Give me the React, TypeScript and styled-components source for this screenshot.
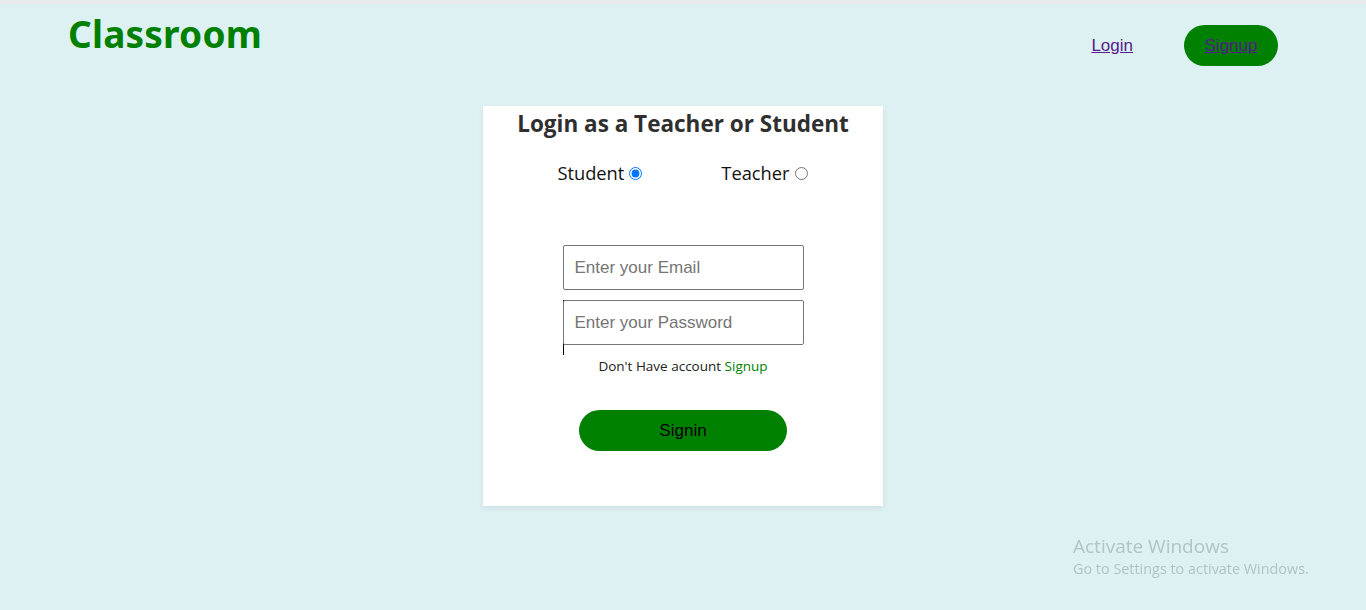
import React from "react";
import styled, { createGlobalStyle } from "styled-components";

const Global = createGlobalStyle`
  html, body { margin: 0; padding: 0; }
  body {
    background: #ddf1f3;
    font-family: "Open Sans", "Noto Sans", sans-serif;
    border-top: 4px solid #e9eaea;
    min-height: 606px;
    overflow: hidden;
  }
`;

const Page = styled.div`
  display: flex;
  flex-direction: column;
  align-items: center;
`;

const Header = styled.header`
  width: 100%;
  display: flex;
  align-items: flex-start;
  justify-content: space-between;
  box-sizing: border-box;
  padding: 0 88px 0 68px;
  height: 102px;
`;

const Brand = styled.h1`
  margin: 5px 0 0;
  font-family: "Noto Sans", "Open Sans", sans-serif;
  font-weight: 700;
  font-size: 37px;
  line-height: 50px;
  color: #008000;
  letter-spacing: 0.2px;
`;

const Nav = styled.nav`
  display: flex;
  align-items: center;
  gap: 51px;
  margin-top: 21px;
`;

const NavLink = styled.a<{ $pill?: boolean }>`
  font-family: "Liberation Sans", Arial, sans-serif;
  font-size: 17px;
  color: #551a8b;
  text-decoration: underline;
  ${(p) =>
    p.$pill
      ? `
    display: inline-flex;
    align-items: center;
    justify-content: center;
    background: #008000;
    width: 94px;
    height: 41px;
    border-radius: 21px;
  `
      : ""}
`;

const Card = styled.main`
  width: 400px;
  height: 400px;
  background: #fff;
  box-shadow: 0 2px 6px rgba(0, 0, 0, 0.08);
  display: flex;
  flex-direction: column;
  align-items: center;
`;

const Title = styled.h2`
  margin: 3px 0 0;
  font-family: "Open Sans", "Noto Sans", sans-serif;
  font-weight: 700;
  font-size: 22.5px;
  line-height: 30px;
  color: #2f2f2f;
`;

const RadioRow = styled.div`
  display: flex;
  gap: 79px;
  margin-top: 21px;
  margin-right: 1px;
`;

const RadioLabel = styled.label`
  display: flex;
  align-items: center;
  gap: 5px;
  font-family: "Open Sans", "Noto Sans", sans-serif;
  font-size: 18.3px;
  color: #111;
`;

const Radio = styled.input`
  margin: 2px 0 0;
  width: 13px;
  height: 13px;
  accent-color: #0075ff;
`;

const Form = styled.form`
  display: flex;
  flex-direction: column;
  align-items: center;
  margin-top: 60px;
`;

const Field = styled.input`
  box-sizing: border-box;
  width: 241px;
  height: 45px;
  border: 1px solid #767676;
  border-radius: 2px;
  padding: 0 11px;
  font-family: "Liberation Sans", Arial, sans-serif;
  font-size: 17px;
  color: #222;
  background: #fff;
  &::placeholder { color: #757575; }
`;

const PasswordWrap = styled.div`
  margin-top: 10px;
  height: 55px;
  width: 241px;
  border-left: 1px solid #000;
  box-sizing: border-box;
  & > input { margin-left: -1px; }
`;

const Hint = styled.p`
  margin: 2px 0 0;
  font-family: "Open Sans", "Noto Sans", sans-serif;
  font-size: 13.5px;
  color: #222;
`;

const HintLink = styled.span`
  color: #008000;
`;

const Submit = styled.button`
  margin-top: 35px;
  width: 208px;
  height: 41px;
  border: none;
  border-radius: 21px;
  background: #008000;
  color: #000;
  font-family: "Liberation Sans", Arial, sans-serif;
  font-size: 17px;
`;

const Watermark = styled.div`
  position: fixed;
  left: 1073px;
  top: 534px;
  color: #b3c2c4;
  font-family: "Open Sans", "Noto Sans", sans-serif;
`;

const WmTitle = styled.div`
  font-size: 19px;
  line-height: 25px;
`;

const WmSub = styled.div`
  font-size: 14.4px;
  line-height: 19px;
`;

export default function App() {
  return (
    <>
      <Global />
      <Page>
        <Header>
          <Brand>Classroom</Brand>
          <Nav>
            <NavLink href="#">Login</NavLink>
            <NavLink href="#" $pill>
              Signup
            </NavLink>
          </Nav>
        </Header>
        <Card>
          <Title>Login as a Teacher or Student</Title>
          <RadioRow>
            <RadioLabel>
              Student <Radio type="radio" name="role" defaultChecked />
            </RadioLabel>
            <RadioLabel>
              Teacher <Radio type="radio" name="role" />
            </RadioLabel>
          </RadioRow>
          <Form onSubmit={(e) => e.preventDefault()}>
            <Field type="email" placeholder="Enter your Email" />
            <PasswordWrap>
              <Field type="password" placeholder="Enter your Password" />
            </PasswordWrap>
            <Hint>
              Don't Have account <HintLink>Signup</HintLink>
            </Hint>
            <Submit type="submit">Signin</Submit>
          </Form>
        </Card>
      </Page>
      <Watermark>
        <WmTitle>Activate Windows</WmTitle>
        <WmSub>Go to Settings to activate Windows.</WmSub>
      </Watermark>
    </>
  );
}
